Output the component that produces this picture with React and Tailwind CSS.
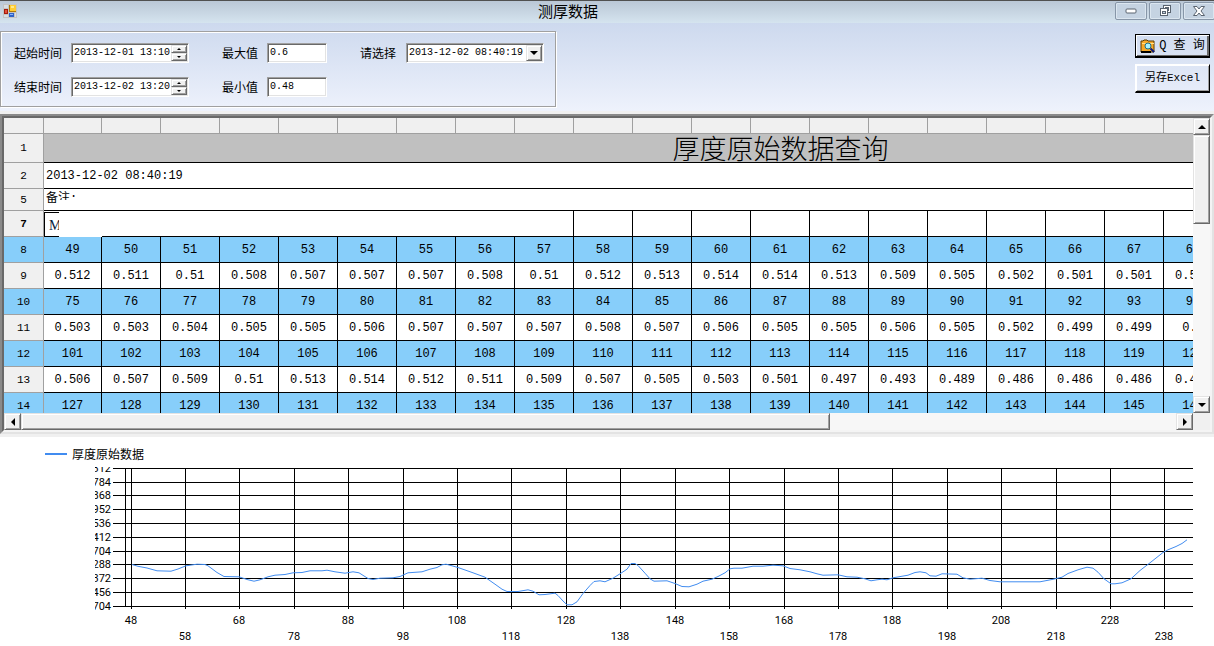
import React from 'react';

const sunken = 'border border-t-[#a0a0a0] border-l-[#a0a0a0] border-b-white border-r-white shadow-[inset_1px_1px_0_#696969,inset_-1px_-1px_0_#e3e3e3]';
const raised = 'border border-t-[#e3e3e3] border-l-[#e3e3e3] border-b-[#696969] border-r-[#696969] shadow-[inset_1px_1px_0_#fff,inset_-1px_-1px_0_#a0a0a0] bg-[#f0f0f0]';
const mono = "font-['Liberation_Mono','Noto_Sans_CJK_SC',monospace]";

const COLUMNS = Array.from({ length: 25 }, (_, i) => i);

const dataRows = [
  { no: 8, index: true, cells: [49, 50, 51, 52, 53, 54, 55, 56, 57, 58, 59, 60, 61, 62, 63, 64, 65, 66, 67, 68] },
  { no: 9, cells: ['0.512', '0.511', '0.51', '0.508', '0.507', '0.507', '0.507', '0.508', '0.51', '0.512', '0.513', '0.514', '0.514', '0.513', '0.509', '0.505', '0.502', '0.501', '0.501', '0.501'] },
  { no: 10, index: true, cells: [75, 76, 77, 78, 79, 80, 81, 82, 83, 84, 85, 86, 87, 88, 89, 90, 91, 92, 93, 94] },
  { no: 11, cells: ['0.503', '0.503', '0.504', '0.505', '0.505', '0.506', '0.507', '0.507', '0.507', '0.508', '0.507', '0.506', '0.505', '0.505', '0.506', '0.505', '0.502', '0.499', '0.499', '0.5'] },
  { no: 12, index: true, cells: [101, 102, 103, 104, 105, 106, 107, 108, 109, 110, 111, 112, 113, 114, 115, 116, 117, 118, 119, 120] },
  { no: 13, cells: ['0.506', '0.507', '0.509', '0.51', '0.513', '0.514', '0.512', '0.511', '0.509', '0.507', '0.505', '0.503', '0.501', '0.497', '0.493', '0.489', '0.486', '0.486', '0.486', '0.486'] },
  { no: 14, index: true, cells: [127, 128, 129, 130, 131, 132, 133, 134, 135, 136, 137, 138, 139, 140, 141, 142, 143, 144, 145, 146] },
];

const yTicks = [
  [31, '312'], [45, '784'], [58, '868'], [72, '952'], [86, '536'], [100, '412'],
  [114, '704'], [127, '288'], [141, '372'], [155, '456'], [169, '704'],
];

const xTicks = [
  [131, 48], [185, 58], [239, 68], [294, 78], [348, 88], [403, 98], [457, 108], [511, 118], [566, 128], [620, 138],
  [675, 148], [729, 158], [784, 168], [838, 178], [892, 188], [947, 198], [1001, 208], [1056, 218], [1110, 228], [1164, 238],
];

const series =
  '132,127.5 138,129.3 147,131 157,133.8 171,134.2 178,132 186,128.8 197,127.2 205,127.5 208,128.8 217,135.5 224,139.5 239,139.8 247,142.5 254,144.2 260,142.8 268,139.8 275,138.2 285,137.5 293,135.8 302,135.5 310,133.8 322,133.8 327,133.2 335,134.8 345,136.2 353,134.8 359,135.8 368,141.5 373,142.5 380,141.2 393,140.8 400,139.5 408,135.8 422,134.8 430,132.2 437,130.5 442,127.8 446,127.2 452,128.8 458,130.5 473,135.8 485,140.2 495,147.2 502,152.2 507,154.5 518,154.5 528,152.8 533,154.2 539,157.8 545,157.5 555,156.2 558,158.5 563,164 567,167.8 572,167.8 577,164.8 583,156.5 590,148.5 594,144.5 600,143.8 605,144.8 613,141.2 620,136.8 627,132.2 631,126.5 635,126.5 638,128.5 645,136.2 650,141.8 654,144.2 667,143.8 675,146.5 682,149.5 689,149.8 697,147.2 703,144.2 712,142.2 718,139.5 725,135.8 730,131.8 734,131.2 742,131.2 753,129.2 763,129.2 773,128.2 783,128.8 790,131.5 800,132.8 810,134.8 817,136.8 823,138.2 838,137.8 847,139.8 857,140.2 865,141.8 871,143.8 877,142.8 882,142.2 887,142.8 893,140.8 908,138.2 915,135.5 920,134.8 926,135.8 930,138.8 936,139.2 942,136.8 957,137.2 963,140.8 970,142.2 982,141.2 990,143.5 1000,144.8 1040,144.8 1052,142.5 1062,140.2 1068,136.5 1078,132.8 1087,130.2 1093,131.2 1098,135.2 1104,141.8 1111,146.8 1115,146.8 1122,145.8 1131,141.8 1140,133.5 1150,125.8 1163,115.5 1168,112.8 1176,109.5 1182,106.5 1187,102.8';

const Triangle = ({ dir, small }) => {
  const shapes = { up: '0,4 4,0 8,4', down: '0,0 8,0 4,4', left: '4,0 4,8 0,4', right: '0,0 4,4 0,8' };
  const vertical = dir === 'up' || dir === 'down';
  const box = vertical ? '0 0 8 4' : '0 0 4 8';
  const size = small ? 'w-1 h-[2px]' : vertical ? 'w-2 h-1' : 'w-1 h-2';
  return (
    <svg viewBox={box} className={size} aria-hidden="true">
      <polygon points={shapes[dir]} fill="#000" />
    </svg>
  );
};

const WindowButton = ({ label, children }) => (
  <button aria-label={label} className="w-8 h-[18px] shrink-0 flex items-center justify-center rounded-[2px] border border-[#8796a8] bg-[#c5d3e2] shadow-[inset_0_0_0_1px_#dbe6f0]">
    {children}
  </button>
);

// Title bar
const TitleBar = () => (
  <header className="h-[23px] flex items-start border-t border-[#505050] bg-linear-to-b from-[#bac7d6] to-[#d5e4ef]">
    <svg viewBox="0 0 14 14" className="w-[14px] h-[14px] mt-[3px] ml-[3px]" aria-hidden="true">
      <rect width="14" height="14" fill="#c4c4c4" />
      <rect x="1" y="1" width="4" height="3" fill="#d8dee4" />
      <rect x="6" y="1" width="7" height="7" fill="#b07a08" />
      <rect x="7" y="1" width="6" height="6" fill="#ffcc33" />
      <rect x="8" y="2" width="3" height="2" fill="#ffe98a" />
      <rect x="1" y="5" width="4" height="5" fill="#a51b0c" />
      <rect x="2" y="6" width="2" height="3" fill="#e2503b" />
      <rect x="6" y="9" width="5" height="4" fill="#2e62c9" />
      <rect x="7" y="10" width="3" height="1" fill="#8db6f7" />
      <rect x="1" y="11" width="4" height="2" fill="#d8dee4" />
      <rect x="12" y="9" width="1" height="4" fill="#d8dee4" />
    </svg>
    <h1 className="flex-1 pl-1 text-center text-[15px] leading-5 font-['Noto_Sans_CJK_SC',sans-serif]">测厚数据</h1>
    <div className="flex gap-[2px] mt-px -mr-px">
      <WindowButton label="最小化">
        <svg viewBox="0 0 12 6" className="w-3 h-[6px]">
          <rect x="1" y="1" width="10" height="4" rx="1" fill="#fff" stroke="#5a6470" />
        </svg>
      </WindowButton>
      <WindowButton label="还原">
        <svg viewBox="0 0 13 12" className="w-[13px] h-3" fill="#fff" stroke="#5a6470">
          <rect x="4.5" y="0.5" width="7" height="7" />
          <rect x="6.5" y="2.5" width="3" height="3" fill="#c5d3e2" />
          <rect x="1.5" y="3.5" width="7" height="7" />
          <rect x="3.5" y="6.5" width="3" height="2" fill="#c5d3e2" />
        </svg>
      </WindowButton>
      <WindowButton label="关闭">
        <svg viewBox="0 0 12 10" className="w-3 h-[10px]">
          <path d="M0.500 0.500H4L6 3L8 0.500H11.500L8 5L11.500 9.500H8L6 7L4 9.500H0.500L4 5Z" fill="#fff" stroke="#5a6470" />
        </svg>
      </WindowButton>
    </div>
  </header>
);

const Field = ({ id, label, children }) => (
  <>
    <label htmlFor={id} className="text-xs leading-5">{label}</label>
    {children}
  </>
);

const TimeInput = ({ id, value }) => (
  <div className={`w-[118px] h-5 p-px flex bg-white ${sunken}`}>
    <input id={id} defaultValue={value} className={`flex-1 min-w-0 pl-px text-[10px] leading-4 outline-none ${mono}`} />
    <div className="w-4 flex flex-col">
      <button aria-label="增加" className={`flex-1 flex items-center justify-center ${raised}`}><Triangle dir="up" small /></button>
      <button aria-label="减少" className={`flex-1 flex items-center justify-center ${raised}`}><Triangle dir="down" small /></button>
    </div>
  </div>
);

const LimitInput = ({ id, value }) => (
  <input id={id} defaultValue={value} className={`w-[60px] h-5 pl-[2px] pb-[2px] text-[10px] bg-white outline-none ${sunken} ${mono}`} />
);

// Filter panel and action buttons
const Toolbar = () => (
  <section className="flex justify-between items-start pt-2 pb-1 pr-1 bg-linear-to-b from-[#cdd9ee] to-[#eef2fc]">
    <form className="grid grid-cols-[57px_151px_45px_93px_46px_139px] gap-y-[14px] items-center pl-[13px] pr-[10px] pt-[11px] pb-[9px] border border-[#a0a0a0] shadow-[inset_1px_1px_0_#fff,1px_1px_0_#fff]">
      <Field id="start" label="起始时间"><TimeInput id="start" value="2013-12-01 13:10" /></Field>
      <Field id="max" label="最大值"><LimitInput id="max" value="0.6" /></Field>
      <Field id="record" label="请选择">
        <div className={`w-[138px] h-5 p-px flex bg-white relative ${sunken}`}>
          <select id="record" className={`w-full pl-px text-[10px] leading-4 appearance-none outline-none ${mono}`}>
            <option>2013-12-02 08:40:19</option>
          </select>
          <span className={`absolute right-px top-px bottom-px w-4 flex items-center justify-center pointer-events-none ${raised}`}>
            <Triangle dir="down" />
          </span>
        </div>
      </Field>
      <Field id="end" label="结束时间"><TimeInput id="end" value="2013-12-02 13:20" /></Field>
      <Field id="min" label="最小值"><LimitInput id="min" value="0.48" /></Field>
    </form>

    <div className="flex flex-col gap-[6px] pt-[3px] w-[75px]">
      <button className={`h-6 flex items-center justify-center gap-[3px] border border-b-2 border-black shadow-[inset_1px_1px_0_#fff,inset_-2px_-1px_0_#696969] text-[12px] whitespace-pre ${mono}`}>
        <svg viewBox="0 0 16 14" className="w-4 h-[14px]" aria-hidden="true">
          <path d="M1 2h2l1-1h3l1 1h6v11H1z" fill="#f7a928" stroke="#5a3c00" />
          <path d="M2 4h4v1H2zM10 4h4v1h-4z" fill="#ffe08a" />
          <path d="M1 13h10" stroke="#000" strokeWidth="2" />
          <circle cx="8" cy="7" r="3" fill="#a8f4ff" stroke="#1f6f86" />
          <path d="M10.500 9.500L14 13" stroke="#0a1a80" strokeWidth="2" />
        </svg>
        Q 查 询
      </button>
      <button className={`h-[29px] border border-t-white border-l-white border-b-2 border-b-black border-r-black shadow-[inset_1px_1px_0_#fff,inset_-1px_-1px_0_#a0a0a0] text-[11px] ${mono}`}>
        另存Excel
      </button>
    </div>
  </section>
);

const RowHeader = ({ children, className = 'bg-[#f0f0f0] font-normal' }) => (
  <th scope="row" className={`border-r border-b border-[#a0a0a0] text-[11px] ${className}`}>{children}</th>
);

const line = 'border-r border-b border-black';

// Spreadsheet
const Sheet = () => (
  <table className={`table-fixed w-[1514px] border-separate border-spacing-0 text-[12px] leading-4 ${mono}`}>
    <colgroup>
      <col className="w-10" />
      {COLUMNS.map((i) => <col key={i} className={i === 0 ? 'w-[58px]' : 'w-[59px]'} />)}
    </colgroup>
    <thead>
      <tr className="h-4 bg-[#f0f0f0]">
        <td className="border-r border-b border-[#a0a0a0]" />
        {COLUMNS.map((i) => <td key={i} className="border-r border-b border-[#a0a0a0]" />)}
      </tr>
    </thead>
    <tbody>
      <tr className="h-[29px]">
        <RowHeader>1</RowHeader>
        <td colSpan={25} className={`bg-[#c0c0c0] text-center text-[27px] leading-7 font-light p-0 font-['Noto_Sans_CJK_SC',sans-serif] ${line}`}>
          厚度原始数据查询
        </td>
      </tr>
      <tr className="h-[26px]">
        <RowHeader>2</RowHeader>
        <td colSpan={25} className={`pl-[2px] ${line}`}>2013-12-02 08:40:19</td>
      </tr>
      <tr className="h-[22px]">
        <RowHeader>5</RowHeader>
        <td colSpan={25} className={`pl-[2px] py-0 align-top ${line}`}>
          <div className="flex pt-[2px]">
            <span>备</span>
            <span className="h-[9px] overflow-hidden">注:</span>
          </div>
        </td>
      </tr>
      <tr className="h-[26px]">
        <RowHeader className="bg-[#f0f0f0] font-bold">7</RowHeader>
        <td colSpan={9} className="relative p-0 border-r border-black">
          {/* cell editor */}
          <div className="w-[15px] h-[25px] overflow-hidden border-l border-b border-t border-black pl-1 text-[14px] leading-[26px] text-[#0a1a3c] font-['Liberation_Serif',serif]">M</div>
          <div className="absolute left-[58px] right-0 bottom-0 border-b border-black" />
        </td>
        {COLUMNS.slice(9).map((i) => <td key={i} className={line} />)}
      </tr>
      {dataRows.map((row) => (
        <tr key={row.no} className={row.index ? 'h-[26px] bg-[#87cefa]' : 'h-[26px] bg-white'}>
          <RowHeader className={row.index ? 'bg-[#87cefa] font-normal' : 'bg-[#f0f0f0] font-normal'}>{row.no}</RowHeader>
          {COLUMNS.map((i) => <td key={i} className={`text-center p-0 ${line}`}>{row.cells[i]}</td>)}
        </tr>
      ))}
    </tbody>
  </table>
);

const ScrollButton = ({ dir, label }) => (
  <button aria-label={label} className={`w-[17px] h-[17px] shrink-0 flex items-center justify-center ${raised}`}>
    <Triangle dir={dir} />
  </button>
);

const Grid = () => (
  <section className="border-2 border-t-[#8a8a8a] border-l-[#8a8a8a] border-b-[#e3e3e3] border-r-[#e3e3e3]">
    <div className="border-2 border-t-[#696969] border-l-[#696969] border-b-[#f4f4f4] border-r-[#f4f4f4]">
      <div className="flex h-[295px]">
        <div className="flex-1 min-w-0 overflow-hidden bg-white">
          <Sheet />
        </div>
        <div className="flex flex-col bg-[#f7f7f7]">
          <ScrollButton dir="up" label="向上滚动" />
          <div className={`h-[89px] ${raised}`} />
          <div className="flex-1" />
          <ScrollButton dir="down" label="向下滚动" />
        </div>
      </div>
      <div className="flex pr-[17px] bg-[#f0f0f0]">
        <ScrollButton dir="left" label="向左滚动" />
        <div className="flex-1 bg-[#f7f7f7]">
          <div className={`w-[70%] h-[17px] ${raised}`} />
        </div>
        <ScrollButton dir="right" label="向右滚动" />
      </div>
    </div>
  </section>
);

// Thickness chart
const Chart = () => (
  <section className="bg-white">
    <svg viewBox="0 0 1214 209" className="block w-full" role="img" aria-label="厚度原始数据">
      <clipPath id="axis-clip">
        <rect x="95" y="30" width="18" height="150" />
      </clipPath>
      <rect x="45" y="16" width="22" height="2" fill="#418cf0" />
      <text x="72" y="22" className="text-[12px] font-['Noto_Sans_CJK_SC',sans-serif]">厚度原始数据</text>

      <g fill="#000" shapeRendering="crispEdges">
        {yTicks.map(([y]) => <rect key={y} x="113" y={y} width="1080" height="1" />)}
        {xTicks.map(([x]) => <rect key={x} x={x} y="31" width="1" height="141" />)}
        <rect x="125" y="31" width="1" height="139" />
      </g>

      <g className="text-[11px] font-['Roboto',sans-serif]" textAnchor="end" clipPath="url(#axis-clip)">
        {yTicks.map(([y, label]) => <text key={y} x="111" y={y + 4}>{label}</text>)}
      </g>
      <g className="text-[11px] font-['Roboto',sans-serif]" textAnchor="middle">
        {xTicks.map(([x, label], i) => <text key={x} x={x} y={i % 2 ? 203 : 187}>{label}</text>)}
      </g>

      <polyline points={series} fill="none" stroke="#418cf0" strokeLinejoin="round" />
    </svg>
  </section>
);

function App() {
  return (
    <div className="min-h-screen flex flex-col bg-white text-black overflow-hidden font-['Noto_Sans_CJK_SC',sans-serif]">
      <TitleBar />
      <Toolbar />
      <main className="flex flex-col">
        <div className="bg-[#f0f0f0] pt-[3px] pb-[3px]">
          <Grid />
        </div>
        <Chart />
      </main>
    </div>
  );
}

export default App;
